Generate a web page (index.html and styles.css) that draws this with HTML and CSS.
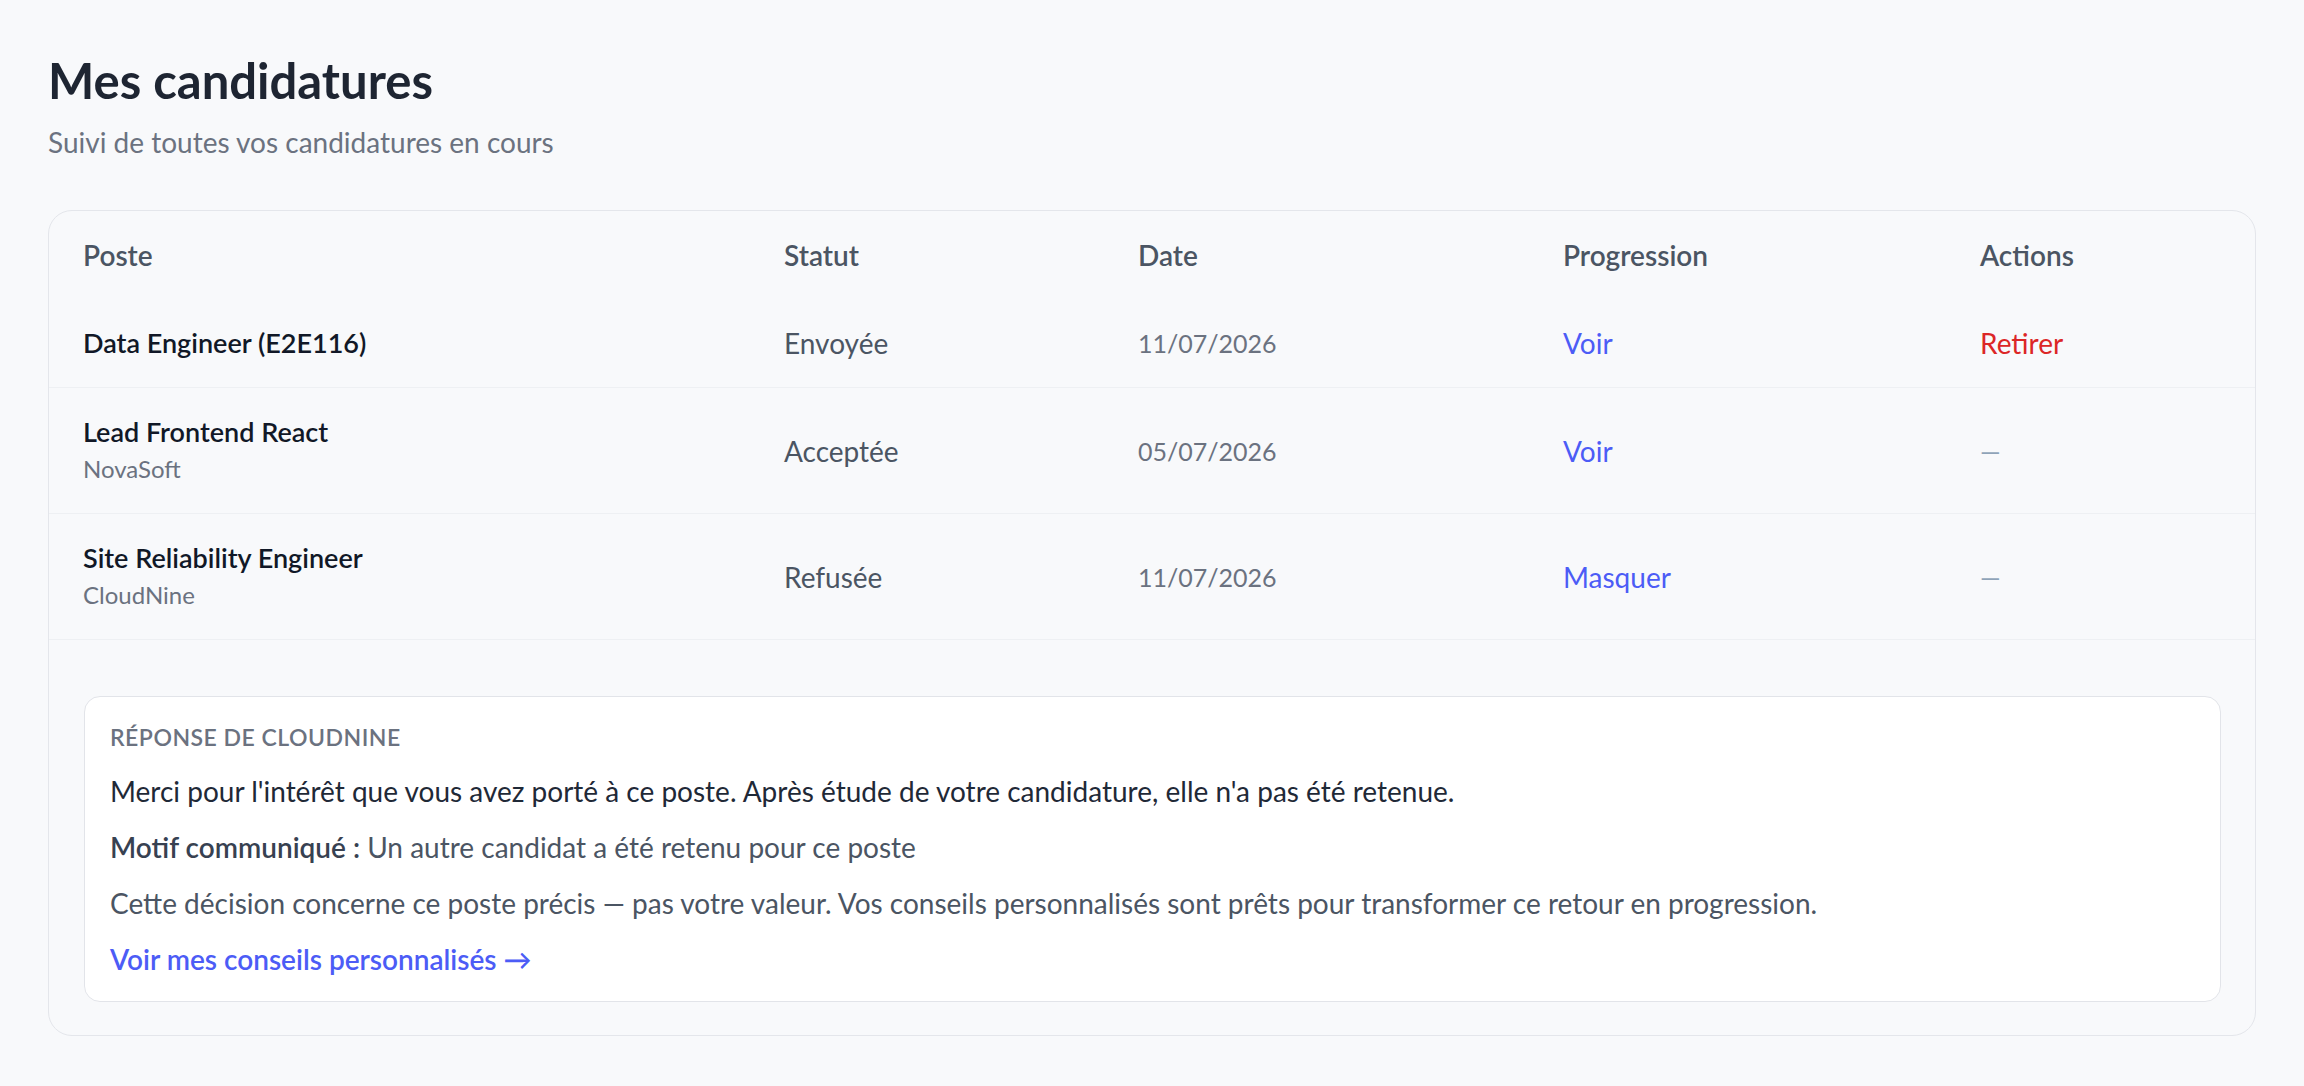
FILE: index.html
```html
<html>
<head>
  <meta charset="UTF-8">
  <title>Mes candidatures</title>
  <link rel="stylesheet" href="styles.css">
</head>
<body>

  <h1>Mes candidatures</h1>
  <p class="sous-titre">Suivi de toutes vos candidatures en cours</p>

  <div class="carte">
    <table>
      <colgroup>
        <col class="col-poste">
        <col class="col-statut">
        <col class="col-date">
        <col class="col-progression">
        <col>
      </colgroup>
      <thead>
        <tr>
          <th>Poste</th>
          <th>Statut</th>
          <th>Date</th>
          <th>Progression</th>
          <th>Actions</th>
        </tr>
      </thead>
      <tbody>
        <tr>
          <td><div class="poste">Data Engineer (E2E116)</div></td>
          <td class="statut">Envoyée</td>
          <td class="date">11/07/2026</td>
          <td><a href="#" class="lien">Voir</a></td>
          <td><a href="#" class="retirer">Retirer</a></td>
        </tr>
        <tr>
          <td>
            <div class="poste">Lead Frontend React</div>
            <div class="entreprise">NovaSoft</div>
          </td>
          <td class="statut">Acceptée</td>
          <td class="date">05/07/2026</td>
          <td><a href="#" class="lien">Voir</a></td>
          <td><span class="vide">—</span></td>
        </tr>
        <tr>
          <td>
            <div class="poste">Site Reliability Engineer</div>
            <div class="entreprise">CloudNine</div>
          </td>
          <td class="statut">Refusée</td>
          <td class="date">11/07/2026</td>
          <td><a href="#" class="lien">Masquer</a></td>
          <td><span class="vide">—</span></td>
        </tr>
        <tr class="detail">
          <td colspan="5">
            <div class="reponse">
              <div class="reponse-titre">Réponse de CloudNine</div>
              <p class="message">Merci pour l'intérêt que vous avez porté à ce poste. Après étude de votre candidature, elle n'a pas été retenue.</p>
              <p><strong>Motif communiqué :</strong> Un autre candidat a été retenu pour ce poste</p>
              <p>Cette décision concerne ce poste précis — pas votre valeur. Vos conseils personnalisés sont prêts pour transformer ce retour en progression.</p>
              <a href="#" class="conseils">Voir mes conseils personnalisés →</a>
            </div>
          </td>
        </tr>
      </tbody>
    </table>
  </div>

</body>
</html>
```

FILE: styles.css
```css
body {
  background-color: #f8f9fb;
  color: #1f2937;
  font-family: 'Lato', 'Noto Sans', sans-serif;
  margin: 0;
  padding: 47px 48px;
}

h1 {
  font-size: 49px;
  font-weight: 700;
  color: #1e2532;
  margin: 0;
  line-height: 66px;
}

.sous-titre {
  font-size: 28px;
  color: #6b7280;
  margin: 9px 0 48px 0;
  line-height: 40px;
}

.carte {
  border: 1px solid #e4e6eb;
  border-radius: 24px;
  overflow: hidden;
}

table {
  width: 100%;
  border-collapse: collapse;
  table-layout: fixed;
}

.col-poste { width: 701px; }
.col-statut { width: 354px; }
.col-date { width: 425px; }
.col-progression { width: 417px; }

th {
  text-align: left;
  font-size: 28px;
  font-weight: 600;
  color: #4b5563;
  height: 88px;
  line-height: 28px;
  padding: 0 0 0 34px;
}

td {
  font-size: 28px;
  line-height: 28px;
  padding: 30px 0 30px 34px;
  border-bottom: 1px solid #eef0f3;
  vertical-align: middle;
}

.poste {
  font-size: 27px;
  font-weight: 600;
  color: #111827;
  line-height: 28px;
}

.entreprise {
  font-size: 24px;
  color: #6b7280;
  margin-top: 9px;
  line-height: 28px;
}

.statut {
  color: #4b5563;
}

.date {
  font-size: 25px;
  color: #6b7280;
}

a {
  text-decoration: none;
}

.lien {
  color: #4c5cf6;
}

.retirer {
  color: #dc2626;
}

.vide {
  font-size: 26px;
  color: #8fa3b8;
}

.detail td {
  border-bottom: none;
  padding: 56px 34px 33px 35px;
}

.reponse {
  background-color: white;
  border: 1px solid #e2e4e9;
  border-radius: 16px;
  padding: 24px 25px 24px 25px;
}

.reponse-titre {
  font-size: 23px;
  font-weight: 600;
  text-transform: uppercase;
  letter-spacing: 0.5px;
  color: #6b7280;
  line-height: 32px;
  margin-bottom: 20px;
}

.reponse p {
  color: #4b5563;
  margin: 0 0 20px 0;
  line-height: 36px;
}

.reponse p.message {
  color: #1f2937;
}

.reponse strong {
  color: #374151;
  font-weight: 600;
}

.conseils {
  display: block;
  color: #4c5cf6;
  font-weight: 600;
  line-height: 36px;
}
```
